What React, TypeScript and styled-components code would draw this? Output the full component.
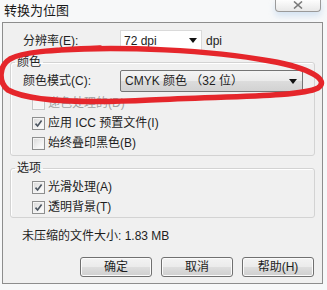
import React from "react";
import styled, { createGlobalStyle } from "styled-components";

const Global = createGlobalStyle`
  html, body { margin: 0; padding: 0; background: #f7f8f9; }
  * { box-sizing: border-box; }
`;

const Page = styled.div`
  position: relative;
  width: 327px;
  height: 290px;
  overflow: hidden;
  background: #f7f8f9;
  font-family: "Liberation Sans", "Noto Sans CJK SC", sans-serif;
  font-size: 12px;
  color: #1e1e1e;
  display: flex;
  flex-direction: column;
`;

const TitleBar = styled.div`
  height: 22px;
  display: flex;
  justify-content: space-between;
  align-items: flex-start;
  padding: 0 6px 0 4px;
`;

const Title = styled.div`
  font-size: 13px;
  line-height: 14px;
  margin-top: 4px;
  color: #1a1a1a;
`;

const CloseButton = styled.div`
  width: 46px;
  height: 13px;
  margin-top: -1px;
  border: 1px solid #9a9a9a;
  border-top: none;
  border-radius: 0 0 4px 4px;
  background: linear-gradient(#ffffff, #e8e8e8);
  display: flex;
  align-items: center;
  justify-content: center;
  box-shadow: 0 4px 6px rgba(150, 190, 230, 0.35);
`;

const Frame = styled.div`
  margin-left: 2px;
  width: 321px;
  height: 262px;
  border: 1px solid #8d8d8d;
  background: #f0f0f0;
  padding: 7px 7px 0 7px;
  display: flex;
  flex-direction: column;
`;

const ResolutionRow = styled.div`
  display: grid;
  grid-template-columns: 97px 82px auto;
  align-items: center;
  height: 21px;
  padding-left: 13px;
`;

const Label = styled.span`
  line-height: 16px;
  white-space: nowrap;
`;

const ComboEdit = styled.div`
  height: 21px;
  background: #ffffff;
  border: 1px solid #dadada;
  display: flex;
  align-items: center;
  justify-content: space-between;
  padding: 0 4px 0 3px;
  line-height: 16px;
`;

const Unit = styled.span`
  margin-left: 4px;
  line-height: 16px;
`;

const Group = styled.fieldset<{ $gap: number; $padTop: number; $padBottom: number }>`
  margin: ${(p) => p.$gap}px 0 0 0;
  padding: ${(p) => p.$padTop}px 11px ${(p) => p.$padBottom}px 12px;
  border: 1px solid #d3d3d3;
  border-radius: 3px;
  box-shadow: inset 1px 1px 0 #ffffff;
  min-width: 0;
`;

const Legend = styled.legend`
  margin-left: -8px;
  padding: 0 2px;
  line-height: 16px;
  font-size: 12px;
`;

const ModeRow = styled.div`
  display: grid;
  grid-template-columns: 97px 1fr;
  align-items: center;
  height: 22px;
  margin-bottom: 1px;
`;

const SelectBox = styled.div`
  height: 22px;
  border: 1px solid #747474;
  border-radius: 2px;
  background: linear-gradient(#f4f4f4 0%, #ebebeb 48%, #dcdcdc 52%, #d2d2d2 100%);
  display: flex;
  align-items: center;
  justify-content: space-between;
  padding: 0 5px 0 4px;
  line-height: 16px;
`;

const CheckRow = styled.div<{ $disabled?: boolean }>`
  height: 20px;
  display: flex;
  align-items: center;
  gap: 3px;
  padding-left: 9px;
  color: ${(p) => (p.$disabled ? "#a2a2a2" : "#1e1e1e")};
  line-height: 16px;
`;

const Box = styled.span<{ $disabled?: boolean }>`
  width: 13px;
  height: 13px;
  flex: none;
  border: 1px solid ${(p) => (p.$disabled ? "#c6c6c6" : "#8e8f8f")};
  background: ${(p) =>
    p.$disabled ? "#f4f4f4" : "linear-gradient(135deg, #d8d8d8 0%, #f2f2f2 60%, #ffffff 100%)"};
  box-shadow: inset 0 0 0 1px ${(p) => (p.$disabled ? "#f7f7f7" : "#f4f4f4")};
  display: flex;
  align-items: center;
  justify-content: center;
`;

const SizeText = styled.div`
  margin-top: 10px;
  padding-left: 12px;
  line-height: 16px;
`;

const ButtonRow = styled.div`
  margin-top: 13px;
  display: flex;
  justify-content: flex-end;
  gap: 9px;
  padding-right: 1px;
`;

const Button = styled.div`
  width: 72px;
  height: 20px;
  border: 1px solid #707070;
  border-radius: 3px;
  background: linear-gradient(#f3f3f3 0%, #ebebeb 48%, #dddddd 52%, #cfcfcf 100%);
  box-shadow: inset 0 0 0 1px #fbfbfb;
  display: flex;
  align-items: center;
  justify-content: center;
  line-height: 16px;
`;

const Scribble = styled.svg`
  position: absolute;
  left: 0;
  top: 0;
  pointer-events: none;
`;

const Arrow = () => (
  <svg width="8" height="5" viewBox="0 0 8 5">
    <path d="M0 0 H8 L4 5 Z" fill="#111" />
  </svg>
);

const Check = () => (
  <svg width="9" height="9" viewBox="0 0 9 9">
    <path d="M1.5 4.6 L3.6 7 L7.6 1.6" fill="none" stroke="#4b5560" strokeWidth="1.6" />
  </svg>
);

const CheckItem = ({ label, checked, disabled }: { label: string; checked?: boolean; disabled?: boolean }) => (
  <CheckRow $disabled={disabled}>
    <Box $disabled={disabled}>{checked && <Check />}</Box>
    <span>{label}</span>
  </CheckRow>
);

export default function App() {
  return (
    <>
      <Global />
      <Page>
        <TitleBar>
          <Title>转换为位图</Title>
          <CloseButton>
            <svg width="10" height="8" viewBox="0 0 10 8">
              <path d="M1 0.5 L9 7.5 M9 0.5 L1 7.5" stroke="#7a7a7a" strokeWidth="1.6" />
            </svg>
          </CloseButton>
        </TitleBar>
        <Frame>
          <ResolutionRow>
            <Label>分辨率(E):</Label>
            <ComboEdit>
              <span>72 dpi</span>
              <Arrow />
            </ComboEdit>
            <Unit>dpi</Unit>
          </ResolutionRow>
          <Group $gap={3} $padTop={0} $padBottom={2}>
            <Legend>颜色</Legend>
            <ModeRow>
              <Label>颜色模式(C):</Label>
              <SelectBox>
                <span>CMYK 颜色 （32 位）</span>
                <Arrow />
              </SelectBox>
            </ModeRow>
            <CheckItem label="递色处理的(D)" disabled />
            <CheckItem label="应用 ICC 预置文件(I)" checked />
            <CheckItem label="始终叠印黑色(B)" />
          </Group>
          <Group $gap={4} $padTop={1} $padBottom={0}>
            <Legend>选项</Legend>
            <CheckItem label="光滑处理(A)" checked />
            <CheckItem label="透明背景(T)" checked />
          </Group>
          <SizeText>未压缩的文件大小: 1.83 MB</SizeText>
          <ButtonRow>
            <Button>确定</Button>
            <Button>取消</Button>
            <Button>帮助(H)</Button>
          </ButtonRow>
        </Frame>
        <Scribble width="327" height="290" viewBox="0 0 327 290">
          <path
            d="M60 50 C 120 46, 210 50, 270 61 C 310 68, 330 80, 318 88 C 300 97, 230 96, 150 100 C 90 103, 30 102, 8 90 C -2 82, -1 66, 10 59 C 22 52, 50 50, 100 48"
            fill="none"
            stroke="#e5262b"
            strokeWidth="5.5"
            strokeLinecap="round"
            strokeLinejoin="round"
          />
        </Scribble>
      </Page>
    </>
  );
}
